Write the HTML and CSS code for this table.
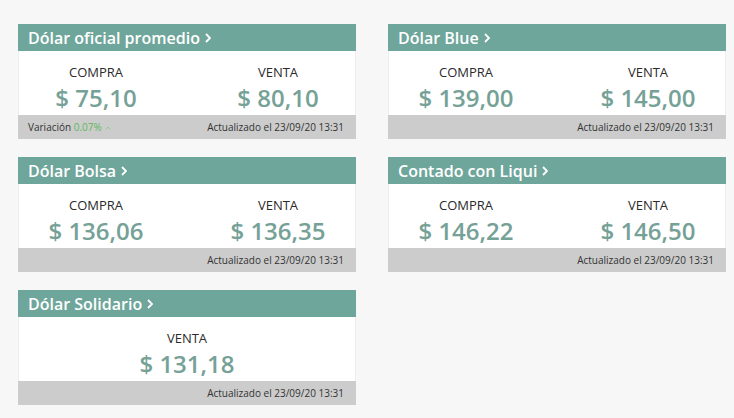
FILE: index.html
```html
<!DOCTYPE html>
<html lang="es">
<head>
<meta charset="utf-8">
<title>Cotizaciones</title>
<link rel="stylesheet" href="styles.css">
</head>
<body>
<div class="grid">
  <div class="card">
    <div class="head">Dólar oficial promedio<svg class="chev" viewBox="0 0 6 10" width="6" height="10"><path d="M1 1l4 4-4 4" fill="none" stroke="#fff" stroke-width="1.8"/></svg></div>
    <div class="body">
      <div class="col"><div class="lbl">COMPRA</div><div class="val">$ 75,10</div></div>
      <div class="col"><div class="lbl">VENTA</div><div class="val">$ 80,10</div></div>
    </div>
    <div class="foot"><span>Variación <span class="up">0.07%</span><svg class="caret" viewBox="0 0 6 4" width="6" height="4"><path d="M0.7 3.3l2.3-2.3 2.3 2.3" fill="none" stroke="#8fcf8f" stroke-width="1"/></svg></span><span>Actualizado el 23/09/20 13:31</span></div>
  </div>
  <div class="card">
    <div class="head">Dólar Blue<svg class="chev" viewBox="0 0 6 10" width="6" height="10"><path d="M1 1l4 4-4 4" fill="none" stroke="#fff" stroke-width="1.8"/></svg></div>
    <div class="body">
      <div class="col"><div class="lbl">COMPRA</div><div class="val">$ 139,00</div></div>
      <div class="col"><div class="lbl">VENTA</div><div class="val">$ 145,00</div></div>
    </div>
    <div class="foot"><span></span><span>Actualizado el 23/09/20 13:31</span></div>
  </div>
  <div class="card">
    <div class="head">Dólar Bolsa<svg class="chev" viewBox="0 0 6 10" width="6" height="10"><path d="M1 1l4 4-4 4" fill="none" stroke="#fff" stroke-width="1.8"/></svg></div>
    <div class="body">
      <div class="col"><div class="lbl">COMPRA</div><div class="val">$ 136,06</div></div>
      <div class="col"><div class="lbl">VENTA</div><div class="val">$ 136,35</div></div>
    </div>
    <div class="foot"><span></span><span>Actualizado el 23/09/20 13:31</span></div>
  </div>
  <div class="card">
    <div class="head">Contado con Liqui<svg class="chev" viewBox="0 0 6 10" width="6" height="10"><path d="M1 1l4 4-4 4" fill="none" stroke="#fff" stroke-width="1.8"/></svg></div>
    <div class="body">
      <div class="col"><div class="lbl">COMPRA</div><div class="val">$ 146,22</div></div>
      <div class="col"><div class="lbl">VENTA</div><div class="val">$ 146,50</div></div>
    </div>
    <div class="foot"><span></span><span>Actualizado el 23/09/20 13:31</span></div>
  </div>
  <div class="card">
    <div class="head">Dólar Solidario<svg class="chev" viewBox="0 0 6 10" width="6" height="10"><path d="M1 1l4 4-4 4" fill="none" stroke="#fff" stroke-width="1.8"/></svg></div>
    <div class="body single">
      <div class="col"><div class="lbl">VENTA</div><div class="val">$ 131,18</div></div>
    </div>
    <div class="foot"><span></span><span>Actualizado el 23/09/20 13:31</span></div>
  </div>
</div>
</body>
</html>
```
FILE: styles.css
```css
html, body {
  margin: 0;
  padding: 0;
  background: #f7f7f7;
  font-family: "Open Sans", "Liberation Sans", sans-serif;
}
.grid {
  display: grid;
  grid-template-columns: 338px 338px;
  column-gap: 32px;
  row-gap: 18px;
  padding: 24px 0 0 18px;
}
.card {
  display: flex;
  flex-direction: column;
}
.head {
  background: #6fa69b;
  color: #fff;
  height: 27px;
  display: flex;
  align-items: center;
  font-size: 16px;
  font-weight: 600;
  padding-left: 10px;
  white-space: nowrap;
}
.chev {
  margin-left: 5px;
  margin-top: 1px;
}
.body {
  background: #fff;
  height: 64px;
  display: grid;
  grid-template-columns: 154px 154px;
  justify-content: space-between;
  box-sizing: border-box;
  padding-top: 12px;
  border-left: 1px solid #eee;
  border-right: 1px solid #eee;
}
.body.single {
  grid-template-columns: 1fr;
}
.col {
  text-align: center;
  display: flex;
  flex-direction: column;
  align-items: center;
}
.lbl {
  font-size: 13px;
  color: #2a2a2a;
  line-height: 18px;
}
.val {
  font-size: 24px;
  font-weight: 600;
  color: #76a197;
  line-height: 33px;
}
.foot {
  background: #cccccc;
  height: 24px;
  display: flex;
  justify-content: space-between;
  align-items: center;
  padding: 0 12px 0 10px;
  font-size: 10px;
  color: #333;
}
.up {
  color: #5cb85c;
}
.caret {
  margin-left: 3px;
  vertical-align: middle;
}
```
